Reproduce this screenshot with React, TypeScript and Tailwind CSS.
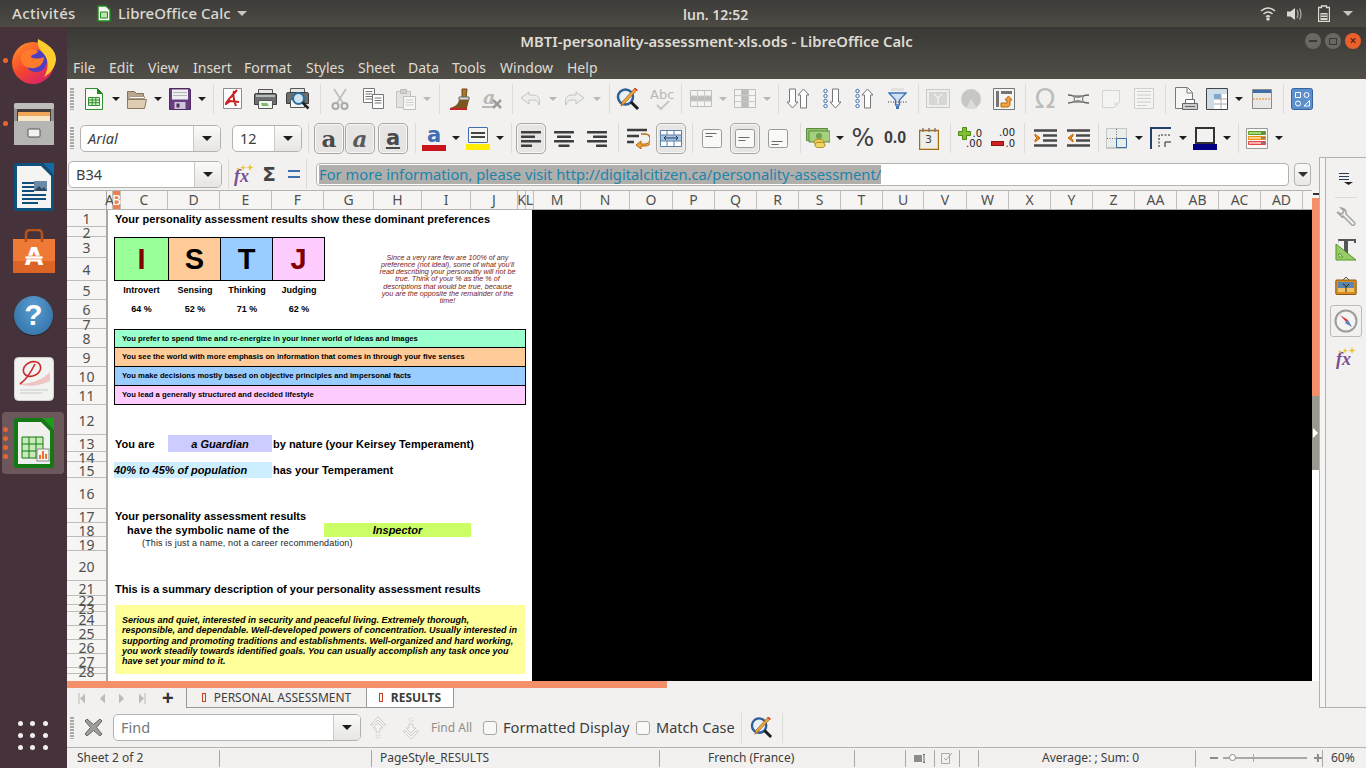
import React from "react";

type IconProps = { children: React.ReactNode; size?: number; h?: number; vb?: string };

function Svg({ children, size = 24, h, vb }: IconProps) {
  return (
    <svg width={size} height={h ?? size} viewBox={vb ?? `0 0 ${size} ${h ?? size}`} className="shrink-0 block">
      {children}
    </svg>
  );
}

/* ---------- toolbar icons ---------- */
const IconNew = () => (
  <Svg size={20} h={24}>
    <path d="M1.5 1.5h12l5 5v16h-17z" fill="#fbfbf8" stroke="#2f8f2f" />
    <path d="M13 1l6 6h-6z" fill="#1d8a1d" />
    <path d="M4.5 10.5h11v8h-11z" fill="#d6efc9" stroke="#2f8f2f" />
    <path d="M4.5 13h11M4.5 15.700h11M8.200 10.500v8M11.800 10.500v8" stroke="#2f8f2f" />
  </Svg>
);
const IconOpen = () => (
  <Svg size={22} h={22}>
    <path d="M1.500 3.500h7l2 2h7v14h-16z" fill="#b8a68d" stroke="#857259" />
    <path d="M3.500 8.500h15v2h-15z" fill="#fff" stroke="#a89a85" />
    <path d="M1.500 11.500h19l-2 9h-17z" fill="#dfcdb1" stroke="#8d7a5f" />
  </Svg>
);
const IconSave = () => (
  <Svg size={22} h={22}>
    <path d="M.5.500h20l1 1v20H.5z" fill="#6a3d83" stroke="#4e2a63" />
    <path d="M3 1.500h16v10H3z" fill="#eeeef0" />
    <path d="M4 4.500h14M4 7.500h14" stroke="#b4b4bb" />
    <path d="M5.500 14h11v7h-11z" fill="#cfc7d5" />
    <path d="M7.500 15.500h3v4h-3z" fill="#4e2a63" />
  </Svg>
);
const IconPdf = () => (
  <Svg size={19} h={21}>
    <path d="M.5.500h18v20H.5z" fill="#fff" stroke="#8d8d8d" />
    <path d="M14 2L6 11c-2 3-3 4-3 5 1 0 2-2 4-3l9 1M11 3c-2 5 0 9 2 15" fill="none" stroke="#cc1f1f" strokeWidth="2" />
  </Svg>
);
const IconPrint = () => (
  <Svg size={23} h={20}>
    <path d="M4.500.500h14v6h-14z" fill="#e6e6e6" stroke="#555" />
    <path d="M.5 5.500q0-1 2-1h18q2 0 2 1v10h-22z" fill="#6b6f70" stroke="#3b3d3d" />
    <path d="M2 6h19v2H2z" fill="#b9bcbc" />
    <path d="M4.500 11.500h14v8h-14z" fill="#f4f4f4" stroke="#555" />
    <path d="M7 14h6l2 3H8z" fill="#7cb96a" />
  </Svg>
);
const IconPreview = () => (
  <Svg size={24} h={22}>
    <path d="M4.500.500h14v6h-14z" fill="#e6e6e6" stroke="#555" />
    <path d="M.5 5.500q0-1 2-1h18q2 0 2 1v10h-22z" fill="#6b6f70" stroke="#3b3d3d" />
    <path d="M4.500 11.500h14v8h-14z" fill="#f4f4f4" stroke="#555" />
    <circle cx="12.500" cy="10.500" r="5.500" fill="#cfe3f2" stroke="#2c6f9e" strokeWidth="2" />
    <path d="M16.500 14.500l6 6" stroke="#222" strokeWidth="2.500" />
  </Svg>
);
const IconCut = () => (
  <Svg size={18} h={22}>
    <path d="M3 1l9 14M15 1L6 15" stroke="#bdbdbd" strokeWidth="1.600" fill="none" />
    <circle cx="4.500" cy="18" r="3" fill="none" stroke="#a9a9a9" strokeWidth="2" />
    <circle cx="13.500" cy="18" r="3" fill="none" stroke="#a9a9a9" strokeWidth="2" />
  </Svg>
);
const IconCopy = () => (
  <Svg size={21} h={21}>
    <path d="M.5.500h11v14H.5z" fill="#fff" stroke="#777" />
    <path d="M2.500 3.500h7M2.500 6h7M2.500 8.500h7M2.500 11h7" stroke="#777" />
    <path d="M9.500 6.500h11v14h-11z" fill="#fff" stroke="#777" />
    <path d="M11.500 10h7M11.500 12.500h7M11.500 15h7" stroke="#777" />
  </Svg>
);
const IconPaste = () => (
  <Svg size={20} h={22}>
    <path d="M.5 3.500h14v16H.5z" fill="#e4e3df" stroke="#c3c1bc" />
    <path d="M4.500 1.500h6v4h-6z" fill="#d1d0cc" stroke="#bbb" />
    <path d="M7.500 8.500h12v13h-12z" fill="#f7f7f6" stroke="#c3c1bc" />
    <path d="M9.500 12h8M9.500 14.500h8M9.500 17h8" stroke="#cfcdc9" />
  </Svg>
);
const IconBrush = () => (
  <Svg size={22} h={22}>
    <path d="M13 1h5l-1 9h-4z" fill="#a8762d" stroke="#6d4a18" />
    <path d="M10 9h10v3H10z" fill="#d8d8d4" stroke="#666" />
    <path d="M10 12h10l-2 8H1c4-1 8-3 9-8z" fill="#7a5520" />
    <path d="M1 20h17v2H1z" fill="#c8222a" />
  </Svg>
);
const IconClear = () => (
  <Svg size={22} h={22}>
    <text x="2" y="16" fontFamily="'DejaVu Serif'" fontStyle="italic" fontWeight="700" fontSize="19" fill="#b9b9b7">a</text>
    <path d="M12 12l8 8M20 12l-8 8" stroke="#9c9c9a" strokeWidth="2.500" />
    <path d="M1 19h11" stroke="#b9b9b7" strokeWidth="2" />
  </Svg>
);
const IconUndo = ({ flip }: { flip?: boolean }) => (
  <svg width="22" height="16" viewBox="0 0 22 16" className={flip ? "-scale-x-100 shrink-0" : "shrink-0"}>
    <path d="M9 1L1 7l8 6v-4h5c3 0 4 2 5 5 2-6-1-10-6-10H9z" fill="#eeeeec" stroke="#c3c3c1" />
  </svg>
);
const IconFind = ({ size = 24 }: { size?: number }) => (
  <svg width={size} height={size} viewBox="0 0 24 24" className="shrink-0">
    <circle cx="9.500" cy="10" r="7.500" fill="#e8f1f8" stroke="#2f5f99" strokeWidth="2.500" />
    <path d="M15 15l7 7" stroke="#1d1d1d" strokeWidth="3" />
    <path d="M21 3L8 17l-3 2 1-4L19 1z" fill="#f0a33c" stroke="#8a5a14" strokeWidth=".7" />
    <path d="M19 1l3 2-1 1-3-2z" fill="#d33" />
  </svg>
);
const IconSpell = () => (
  <div className="relative w-[22px] h-[21px] shrink-0">
    <span className="block text-[13px] leading-[13px] text-[#b8b8b6] font-['DejaVu_Sans']">Abc</span>
    <svg width="14" height="10" viewBox="0 0 14 10" className="absolute left-[6px] top-[12px]">
      <path d="M1 5l4 4 8-8" fill="none" stroke="#c6c6c4" strokeWidth="2" />
    </svg>
  </div>
);
const IconRows = () => (
  <Svg size={22} h={17}>
    <path d="M.5.500h21v16H.5z" fill="#f4f4f2" stroke="#bdbdbb" />
    <path d="M1 6h20v5H1z" fill="#bdbdbb" />
    <path d="M7.500 1v15M14.500 1v15M1 6h20M1 11h20" stroke="#c9c9c7" />
  </Svg>
);
const IconCols = () => (
  <Svg size={22} h={19}>
    <path d="M.5.500h21v18H.5z" fill="#f4f4f2" stroke="#bdbdbb" />
    <path d="M8 1h6v17H8z" fill="#bdbdbb" />
    <path d="M7.500 1v17M14.500 1v17M1 6.500h20M1 12.500h20" stroke="#c9c9c7" />
  </Svg>
);
const Arrow = ({ up, x }: { up?: boolean; x: number }) => (
  <path
    d={up ? `M${x} 1l5.500 6H${x + 3}v13h-6V7H${x - 5.500}z` : `M${x} 20l5.500-6H${x + 3}V1h-6v13H${x - 5.500}z`}
    fill="#fff"
    stroke="#777"
  />
);
const IconSort = () => (
  <Svg size={24} h={21}>
    <Arrow x={6.500} />
    <Arrow x={17.500} up />
  </Svg>
);
const Dots = () => (
  <>
    {[2, 7, 12, 17].map((y) => (
      <circle key={y} cx="2.500" cy={y + 1} r="1.700" fill="#fff" stroke="#3f6da8" />
    ))}
  </>
);
const IconSortDown = () => (
  <Svg size={19} h={21}>
    <Dots />
    <Arrow x={12.500} />
  </Svg>
);
const IconSortUp = () => (
  <Svg size={19} h={21}>
    <Dots />
    <Arrow x={12.500} up />
  </Svg>
);
const IconFilter = () => (
  <Svg size={19} h={23}>
    <path d="M3 1h13v3H3z" fill="#e2e2e0" />
    <path d="M1 6h17l-6.500 7v5h-4v-5z" fill="#cfe0f0" stroke="#3f78b5" strokeWidth="1.300" />
    <path d="M0 15h19" stroke="#333" strokeDasharray="1 1.500" />
    <path d="M8 19h3v3H8z" fill="#3f78b5" />
  </Svg>
);
const IconImage = () => (
  <Svg size={24} h={19}>
    <path d="M.5.500h23v18H.5z" fill="#eeeeec" stroke="#c9c9c7" />
    <path d="M3 3h18v13H3z" fill="#d6d6d4" />
    <path d="M12 15V9L8 5M12 9l4-4" stroke="#f2f2f0" strokeWidth="1.300" fill="none" />
  </Svg>
);
const IconChart = () => (
  <Svg size={20} h={20}>
    <circle cx="10" cy="10" r="10" fill="#c6c6c4" />
    <path d="M10 10L5 19a10 10 0 0 0 11 0z" fill="#dcdcda" />
  </Svg>
);
const IconPivot = () => (
  <Svg size={22} h={22}>
    <path d="M.5.500h21v21H.5z" fill="#f4f4f2" stroke="#777" />
    <path d="M3 3h3v16H3zM8 3h11v3H8z" fill="#757575" />
    <path d="M8 19h6c3 0 3-2 3-4v-3h2l-3.500-4-3.500 4h2v3H8z" fill="#f0a33c" stroke="#b46a10" />
  </Svg>
);
const IconLink = () => (
  <Svg size={21} h={14}>
    <path d="M0 3c5 0 6 2 10 2s5-2 11-2M0 11c5 0 6-2 10-2s5 2 11 2" fill="none" stroke="#666" strokeWidth="1.400" />
    <path d="M5 4c2 1 2 5 0 6h11c-2-1-2-5 0-6z" fill="none" stroke="#8a8a88" strokeWidth="1.300" />
  </Svg>
);
const IconNote = () => (
  <Svg size={18} h={18}>
    <path d="M.5.500h17v12l-5 5H.5z" fill="#f3f3f1" stroke="#d4d4d2" />
    <path d="M17 12.500h-4.500V17z" fill="#dfdfdd" />
  </Svg>
);
const IconHeaderPage = () => (
  <Svg size={20} h={21}>
    <path d="M.5.500h19v20H.5z" fill="#f4f4f2" stroke="#cfcfcd" />
    <path d="M3 3.500h14M3 7h14M3 10.500h14M3 14h14M3 17.500h10" stroke="#cdcdcb" />
  </Svg>
);
const IconPrintArea = () => (
  <Svg size={24} h={23}>
    <path d="M1.500.500h12l5 5v16h-17z" fill="#f6f6f4" stroke="#7a7a7a" />
    <path d="M13 1v5h5" fill="none" stroke="#7a7a7a" />
    <path d="M11.500 12.500h9v5h-9z" fill="#fff" stroke="#666" />
    <path d="M8.500 16.500h15v6h-15z" fill="#ccc" stroke="#666" />
    <path d="M11 19.500h10" stroke="#666" />
  </Svg>
);
const IconFreeze = () => (
  <Svg size={22} h={22}>
    <path d="M.5.500h21v21H.5z" fill="#fff" stroke="#444" />
    <path d="M1 1h20v5H1zM1 6h7v15H1z" fill="#cfdde9" />
    <path d="M8 6h7v5H8z" fill="#7fa6d0" />
    <path d="M8 11h13M8 16h13M15 6v15" stroke="#aaa" />
  </Svg>
);
const IconSplit = () => (
  <Svg size={20} h={20}>
    <path d="M.5.500h19v19H.5z" fill="#e8e8e6" stroke="#8c8c8a" />
    <path d="M1 1h18v3H1z" fill="#3f6da8" />
    <path d="M1 10h18" stroke="#f08a1d" strokeDasharray="2 1" />
  </Svg>
);
const IconShapes = () => (
  <Svg size={22} h={22}>
    <rect x=".5" y=".5" width="21" height="21" rx="2" fill="#5d8fcf" stroke="#34659f" />
    <path d="M4.500 4.500h5v5h-5z" fill="none" stroke="#fff" />
    <circle cx="15.500" cy="7" r="2.500" fill="none" stroke="#fff" />
    <circle cx="7" cy="15.500" r="2.500" fill="none" stroke="#fff" />
    <path d="M13 18h5.500v-5.500z" fill="none" stroke="#fff" />
  </Svg>
);

/* second row */
const IconAlign = ({ kind }: { kind: "l" | "c" | "r" }) => {
  const rows = [20, 14, 20, 11];
  return (
    <Svg size={20} h={17}>
      {rows.map((w, i) => {
        const x = kind === "l" ? 0 : kind === "r" ? 20 - w : (20 - w) / 2;
        return <rect key={i} x={x} y={1 + i * 4.500} width={w} height={2.400} rx=".5" fill="#3d3d3d" />;
      })}
    </Svg>
  );
};
const IconWrap = () => (
  <Svg size={23} h={21}>
    <path d="M0 2h20M0 8h12M0 14h7" stroke="#3d3d3d" strokeWidth="2.400" />
    <path d="M14 6h4a4 4 0 0 1 0 10h-4v-3l-5 4 5 4v-3h4a6 6 0 0 0 1-12h-5z" fill="#f0a33c" stroke="#b46a10" />
  </Svg>
);
const IconMerge = () => (
  <Svg size={22} h={17}>
    <path d="M.5.500h21v16H.5z" fill="#fff" stroke="#5a7ea6" />
    <path d="M1 5h20v6H1z" fill="#a9c4de" />
    <path d="M1 5h20M1 11h20M7 1v4M14 1v4M7 11v5M14 11v5" stroke="#5a7ea6" />
    <path d="M4 8h14M4 8l2-2M4 8l2 2M18 8l-2-2M18 8l-2 2" stroke="#1c3d66" fill="none" />
  </Svg>
);
const IconVAlign = ({ y }: { y: number }) => (
  <Svg size={20} h={19}>
    <rect x=".5" y=".5" width="19" height="18" rx="2" fill="#f9f9f8" stroke="#9a9a98" />
    <path d={`M3.500 ${y}h11M3.500 ${y + 3}h7`} stroke="#6b6b69" />
  </Svg>
);
const IconCurrency = () => (
  <Svg size={24} h={20}>
    <path d="M.5.500h21v12H.5z" fill="#8fc26a" stroke="#5c8a3c" />
    <path d="M3 3h21v11H3z" fill="#a6d080" stroke="#5c8a3c" />
    <circle cx="13" cy="8" r="3" fill="#6ea24a" />
    <ellipse cx="13" cy="14" rx="5" ry="3" fill="#e8cc57" stroke="#a88a1d" />
    <ellipse cx="14" cy="17" rx="5" ry="2.700" fill="#f0d766" stroke="#a88a1d" />
  </Svg>
);
const IconDate = () => (
  <div className="relative w-[20px] h-[23px] shrink-0">
    <svg width="20" height="23" viewBox="0 0 20 23">
      <path d="M.5 3.500h19v19H.5z" fill="#eeeeea" stroke="#a66c12" strokeWidth="1.400" />
      <path d="M4 1v4M10 1v4M16 1v4" stroke="#777" strokeWidth="1.400" />
    </svg>
    <span className="absolute left-[6px] top-[6px] text-[11px] leading-[14px] text-[#444] font-['DejaVu_Sans']">3</span>
  </div>
);
const IconIndent = ({ out }: { out?: boolean }) => (
  <Svg size={23} h={18}>
    <path d="M0 1.500h23M9 6.500h14M9 11.500h14M0 16.500h23" stroke="#4a4a4a" strokeWidth="2.400" />
    <path d={out ? "M6 5L1 9l5 4V11L4 9l2-2z" : "M1 5l5 4-5 4v-2l2-2-2-2z"} fill="#ee8a1c" stroke="#c16a0c" />
  </Svg>
);
const IconBorders = () => (
  <Svg size={22} h={21}>
    <path d="M.5.500h20v19H.5z" fill="#e9eeea" stroke="#c5c5c3" />
    <path d="M10.500 1v9" stroke="#667" strokeDasharray="1 1.500" />
    <path d="M1 10.500h9" stroke="#667" strokeDasharray="1 1.500" />
    <path d="M10.500 10.500h10v9h-10z" fill="none" stroke="#3f6da8" />
    <path d="M0 20.500h21" stroke="#c8c8c6" />
  </Svg>
);
const IconBorderStyle = () => (
  <Svg size={22} h={23}>
    <path d="M1 22V1h20" fill="none" stroke="#22406a" strokeWidth="2" />
    <path d="M9 20V8h11" fill="none" stroke="#222" strokeDasharray="2 1.500" />
    <path d="M15 20v-5h6" fill="none" stroke="#222" />
  </Svg>
);
const IconBorderColor = () => (
  <div className="flex flex-col items-center shrink-0">
    <svg width="20" height="17" viewBox="0 0 20 17">
      <path d="M1 1h18v15H1z" fill="#f2f2f0" stroke="#333" strokeWidth="2" />
    </svg>
    <div className="w-[24px] h-[6px] bg-[#000080]" />
  </div>
);
const IconCond = () => (
  <Svg size={22} h={21}>
    <path d="M.5.500h21v20H.5z" fill="#f8f8f6" stroke="#9a9a98" />
    <path d="M2.500 3.500h17v3h-17z" fill="#a7d67a" stroke="#5f9d22" />
    <path d="M2.500 8.500h17v3h-17z" fill="#ffd08a" stroke="#ef8e14" />
    <path d="M2.500 13.500h17v3h-17z" fill="#ffb0b0" stroke="#e54545" />
    <path d="M15 5h4M15 10h4M15 15h4" stroke="#333" />
  </Svg>
);
const IconFx = () => (
  <div className="relative shrink-0 w-[22px] h-[20px]">
    <span className="absolute left-[1px] -bottom-[1px] font-['Liberation_Serif'] italic font-bold text-[18px] leading-[18px] text-[#7a4f93]">fx</span>
    <svg width="22" height="20" viewBox="0 0 22 20" className="absolute inset-0">
      <path d="M10 1l1 2 2 .5-2 1-1 2-.7-2-2-1 2-.5zM17 0l1 2.500 2.500 1-2.500 1-1 2.500-1-2.500-2.500-1 2.500-1z" fill="#e8c93a" />
      <path d="M5 3l.6 1.300 1.400.5-1.400.5L5 6.600l-.6-1.300L3 4.800l1.400-.5z" fill="#e8c93a" />
    </svg>
  </div>
);

/* ---------- toolbar parts ---------- */
function T({ w, children }: { w: string; children: React.ReactNode }) {
  return <div className={`${w} h-full flex items-center justify-center shrink-0`}>{children}</div>;
}
function Dd({ w, dim }: { w: string; dim?: boolean }) {
  return (
    <T w={w}>
      <div className={`w-0 h-0 border-x-[4px] border-x-transparent border-t-[4px] ${dim ? "border-t-[#b8b8b6]" : "border-t-[#1d1d1d]"}`} />
    </T>
  );
}
function Sep({ w }: { w: string }) {
  return (
    <T w={w}>
      <div className="w-px h-[30px] bg-[#dcdbd8]" />
    </T>
  );
}
function Handle() {
  return (
    <div className="w-[4px] h-[22px] shrink-0 bg-[repeating-linear-gradient(to_bottom,#a9a8a5_0,#a9a8a5_2px,transparent_2px,transparent_3px)]" />
  );
}
function Pressed({ children }: { children: React.ReactNode }) {
  return (
    <div className="w-[30px] h-[31px] rounded-[5px] border border-[#a8a7a4] bg-[#e6e5e3] flex items-center justify-center shadow-[inset_0_0_0_1px_#f7f7f6]">
      {children}
    </div>
  );
}
function Combo({ w, text, italic, btn = "w-[27px]", muted }: { w: string; text: string; italic?: boolean; btn?: string; muted?: boolean }) {
  return (
    <div className={`${w} h-[27px] shrink-0 flex rounded-[5px] border border-[#b3b2af] bg-white overflow-hidden`}>
      <div className={`flex-1 pl-[7px] text-[14.5px] leading-[25px] ${muted ? "text-[#777]" : "text-[#3d3d3d]"} ${italic ? "italic" : ""}`}>{text}</div>
      <div className={`${btn} border-l border-[#c9c8c5] bg-linear-to-b from-[#fafaf9] to-[#e6e5e3] flex items-center justify-center`}>
        <div className="w-0 h-0 border-x-[5px] border-x-transparent border-t-[5px] border-t-[#1d1d1d]" />
      </div>
    </div>
  );
}

/* ---------- desktop bits ---------- */
function TopBar() {
  return (
    <div className="h-[27px] shrink-0 relative flex items-center bg-linear-to-b from-[#3d3c38] to-[#4e4b45] text-[#dcd9d2] text-[15px] font-medium">
      <span className="ml-[12px] w-[85px] tracking-[0.35px]">Activités</span>
      <svg width="14" height="17" viewBox="0 0 14 17" className="shrink-0">
        <path d="M1 1h8l4 4v11H1z" fill="#f4f4f2" stroke="#1f8a1f" strokeWidth="1.400" />
        <path d="M3.500 7h7v6h-7z" fill="#bfe3b0" stroke="#1f8a1f" />
      </svg>
      <span className="ml-[7px] tracking-[0.05px]">LibreOffice Calc</span>
      <div className="ml-[6px] w-0 h-0 border-x-[5px] border-x-transparent border-t-[5px] border-t-[#c9c6bf]" />
      <span className="absolute left-[683px] top-[4px] text-[14px] font-semibold">lun. 12:52</span>
      <div className="ml-auto flex items-center mr-[13px]">
        <svg width="16" height="15" viewBox="0 0 16 15">
          <path d="M1 5q7-6 14 0M3.500 8q4.500-4 9 0M6 10.700q2-1.700 4 0" fill="none" stroke="#dcd9d2" strokeWidth="1.500" />
          <circle cx="8" cy="13" r="1.700" fill="#dcd9d2" />
        </svg>
        <svg width="16" height="14" viewBox="0 0 16 14" className="ml-[11px]">
          <path d="M0 4.500h3.500L8 1v12L3.500 9.500H0z" fill="#dcd9d2" />
          <path d="M10 3q2 4 0 8M12.500 1.500q3 5.500 0 11" fill="none" stroke="#a9a69f" strokeWidth="1.300" />
        </svg>
        <svg width="12" height="17" viewBox="0 0 12 17" className="ml-[15px]">
          <path d="M3.500 1h5v1.500H11.500V16.500H.5V2.500h3z" fill="none" stroke="#dcd9d2" strokeWidth="1.300" />
          <path d="M2.500 8h7v7h-7z" fill="#dcd9d2" />
          <path d="M3 10h6M3 12.500h6" stroke="#4a4843" />
        </svg>
        <div className="ml-[13px] w-0 h-0 border-x-[5px] border-x-transparent border-t-[5px] border-t-[#c9c6bf]" />
      </div>
    </div>
  );
}

function Firefox() {
  return (
    <svg width="46" height="46" viewBox="0 0 46 46">
      <defs>
        <linearGradient id="ff" x1="0" y1="0" x2=".7" y2="1">
          <stop offset="0" stopColor="#ff9a2a" />
          <stop offset=".55" stopColor="#f6472c" />
          <stop offset="1" stopColor="#d9246a" />
        </linearGradient>
      </defs>
      <circle cx="22" cy="25" r="21" fill="url(#ff)" />
      <circle cx="25" cy="23" r="11" fill="#4f3fc0" />
      <path d="M27 1c-1 6 1 10 5 14 6 6 6 16 1 24 7-4 12-11 12-18 0-9-8-15-18-20z" fill="#ffcb2f" />
      <path d="M11 15c4-4 10-5 16-2-1 4-7 3-7 6 3 2 8 2 13 0 0 7-6 12-13 11-5 0-9-3-10-8 0-3 0-5 1-7z" fill="#ff7a2a" />
    </svg>
  );
}
function FilesIcon() {
  return (
    <svg width="42" height="44" viewBox="0 0 42 44">
      <rect x="1" y="1" width="40" height="42" rx="2" fill="#8f8f8d" />
      <rect x="1" y="1" width="40" height="6" rx="2" fill="#bdbdbb" />
      <rect x="4" y="7" width="34" height="14" fill="#433e3c" />
      <rect x="5" y="10" width="32" height="4" fill="#f2a65a" />
      <rect x="5" y="14" width="32" height="5" fill="#f7e6c9" />
      <path d="M1 19h40v24H1z" fill="#b5b5b3" />
      <rect x="15" y="27" width="12" height="8" rx="1" fill="#f2f2f0" stroke="#555" />
    </svg>
  );
}
function WriterIcon() {
  return (
    <svg width="40" height="48" viewBox="0 0 40 48">
      <path d="M0 2q0-2 2-2h26l12 12v34q0 2-2 2H2q-2 0-2-2z" fill="#0f4f7c" />
      <path d="M3 3h24l10 10v32H3z" fill="#f4f4f2" />
      <path d="M29 0l11 12V0z" fill="#0f6ca8" />
      <path d="M8 20h12M8 24h12M8 28h12M8 32h24M8 36h24M8 40h16" stroke="#0f4f7c" strokeWidth="2" />
      <rect x="20" y="18" width="13" height="10" fill="#6d8aa5" />
      <path d="M20 28l5-5 3 3 2-2 3 4z" fill="#2a4a66" />
    </svg>
  );
}
function ShopIcon() {
  return (
    <svg width="42" height="44" viewBox="0 0 42 44">
      <path d="M0 10h42v34H0z" fill="#ef7a35" />
      <path d="M0 32h42v12H0z" fill="#dc6425" />
      <path d="M13 13V5q0-4 4-4h8q4 0 4 4v8" fill="none" stroke="#b5531c" strokeWidth="2.500" />
      <text x="21" y="36" textAnchor="middle" fontFamily="'DejaVu Sans'" fontWeight="700" fontSize="24" fill="#fff">A</text>
      <rect x="12" y="27" width="18" height="3" rx="1.500" fill="#fff" stroke="#ef7a35" strokeWidth=".6" />
    </svg>
  );
}
function HelpIcon() {
  return (
    <div className="w-[39px] h-[39px] rounded-full bg-radial-[at_50%_30%] from-[#5c9ed0] to-[#2a6ba3] flex items-center justify-center text-white font-bold text-[30px] leading-none font-['Liberation_Sans'] shadow-[0_1px_1px_#0006]">
      ?
    </div>
  );
}
function PaperIcon() {
  return (
    <svg width="40" height="44" viewBox="0 0 40 44">
      <rect x=".5" y=".5" width="39" height="43" rx="4" fill="#f2f2f0" stroke="#cfcfcd" />
      <path d="M4 27c10 0 24-3 32-12v9c-10 5-22 6-32 3z" fill="#eec4c4" />
      <ellipse cx="18" cy="12" rx="9" ry="7" fill="none" stroke="#c92a2a" strokeWidth="1.600" transform="rotate(-25 18 12)" />
      <path d="M21 7c-4 8-9 16-15 20" fill="none" stroke="#c92a2a" strokeWidth="1.600" />
      <path d="M6 33h28M6 36h22" stroke="#c9c9c7" />
    </svg>
  );
}
function CalcIcon() {
  return (
    <svg width="40" height="50" viewBox="0 0 40 50">
      <path d="M0 3q0-3 3-3h25l12 12v35q0 3-3 3H3q-3 0-3-3z" fill="#137a13" />
      <path d="M4 4h23l9 9v33H4z" fill="#f0f0ee" />
      <path d="M29 0l11 12V0z" fill="#18a018" />
      <path d="M8 19h21v21H8z" fill="#c7eab8" stroke="#137a13" />
      <path d="M8 26h21M8 33h21M15 19v21M22 19v21" stroke="#137a13" />
      <rect x="23" y="31" width="12" height="12" fill="#f4f4f2" stroke="#888" />
      <path d="M25 41v-4h2v4zM28 41v-8h2v8zM31 41v-5h2v5z" fill="#e8762d" />
    </svg>
  );
}

function DockSlot({ className, dots = 0, active, children }: { className: string; dots?: number; active?: boolean; children: React.ReactNode }) {
  return (
    <div className={`relative w-[67px] flex items-center justify-center shrink-0 ${className}`}>
      {active && <div className="absolute left-[2px] right-[3px] inset-y-0 rounded-[4px] bg-[#6b575c]" />}
      {dots > 0 && (
        <div className="absolute left-[3px] inset-y-0 flex flex-col justify-center gap-[4px] z-10">
          {Array.from({ length: dots }).map((_, i) => (
            <div key={i} className="w-[5px] h-[5px] rounded-full bg-[#e9652f]" />
          ))}
        </div>
      )}
      <div className="relative">{children}</div>
    </div>
  );
}

function Dock() {
  return (
    <div className="w-[67px] shrink-0 bg-[#46323a] flex flex-col">
      <DockSlot className="h-[63px] mt-[2px]" dots={1}><Firefox /></DockSlot>
      <DockSlot className="h-[63px]" dots={1}><FilesIcon /></DockSlot>
      <DockSlot className="h-[63px]"><WriterIcon /></DockSlot>
      <DockSlot className="h-[64px] mt-[1px]"><ShopIcon /></DockSlot>
      <DockSlot className="h-[64px]"><HelpIcon /></DockSlot>
      <DockSlot className="h-[63px]"><PaperIcon /></DockSlot>
      <DockSlot className="h-[62px] mt-[2px]" dots={4} active><CalcIcon /></DockSlot>
      <div className="mt-auto mb-[18px] ml-[18px] grid grid-cols-3 gap-[7px] w-[30px]">
        {Array.from({ length: 9 }).map((_, i) => (
          <div key={i} className="w-[5px] h-[5px] rounded-full bg-[#f1efec]" />
        ))}
      </div>
    </div>
  );
}

/* ---------- toolbars ---------- */
function ToolbarOne() {
  return (
    <div className="h-[39px] shrink-0 flex items-center pl-[3px]">
      <Handle />
      <div className="w-[4px] shrink-0" />
      <T w="w-[32px]"><IconNew /></T>
      <Dd w="w-[12px]" />
      <T w="w-[30px]"><IconOpen /></T>
      <Dd w="w-[12px]" />
      <T w="w-[32px]"><IconSave /></T>
      <Dd w="w-[12px]" />
      <Sep w="w-[10px]" />
      <T w="w-[28px]"><IconPdf /></T>
      <T w="w-[38px]"><IconPrint /></T>
      <T w="w-[28px]"><IconPreview /></T>
      <Sep w="w-[16px]" />
      <T w="w-[24px]"><IconCut /></T>
      <T w="w-[42px]"><IconCopy /></T>
      <T w="w-[24px]"><IconPaste /></T>
      <Dd w="w-[18px]" dim />
      <Sep w="w-[6px]" />
      <T w="w-[36px]"><IconBrush /></T>
      <T w="w-[28px]"><IconClear /></T>
      <Sep w="w-[12px]" />
      <T w="w-[26px]"><IconUndo /></T>
      <Dd w="w-[18px]" dim />
      <T w="w-[24px]"><IconUndo flip /></T>
      <Dd w="w-[22px]" dim />
      <Sep w="w-[2px]" />
      <T w="w-[36px]"><IconFind /></T>
      <T w="w-[30px]"><IconSpell /></T>
      <Sep w="w-[10px]" />
      <T w="w-[30px]"><IconRows /></T>
      <Dd w="w-[14px]" dim />
      <T w="w-[30px]"><IconCols /></T>
      <Dd w="w-[14px]" dim />
      <Sep w="w-[8px]" />
      <T w="w-[32px]"><IconSort /></T>
      <T w="w-[36px]"><IconSortDown /></T>
      <T w="w-[28px]"><IconSortUp /></T>
      <T w="w-[38px]"><IconFilter /></T>
      <Sep w="w-[4px]" />
      <T w="w-[36px]"><IconImage /></T>
      <T w="w-[30px]"><IconChart /></T>
      <T w="w-[36px]"><IconPivot /></T>
      <Sep w="w-[6px]" />
      <T w="w-[34px]"><span className="font-['DejaVu_Sans'] text-[27px] leading-none text-[#bdbdbb]">Ω</span></T>
      <T w="w-[32px]"><IconLink /></T>
      <T w="w-[34px]"><IconNote /></T>
      <T w="w-[32px]"><IconHeaderPage /></T>
      <Sep w="w-[10px]" />
      <T w="w-[32px]"><IconPrintArea /></T>
      <T w="w-[30px]"><IconFreeze /></T>
      <Dd w="w-[14px]" />
      <T w="w-[32px]"><IconSplit /></T>
      <Sep w="w-[10px]" />
      <T w="w-[28px]"><IconShapes /></T>
    </div>
  );
}

function ToolbarTwo() {
  return (
    <div className="h-[40px] shrink-0 flex items-center pl-[3px]">
      <Handle />
      <div className="w-[6px] shrink-0" />
      <Combo w="w-[141px]" text="Arial" italic />
      <div className="w-[11px] shrink-0" />
      <Combo w="w-[70px]" text="12" />
      <Sep w="w-[12px]" />
      <T w="w-[30px]"><Pressed><span className="font-['DejaVu_Serif'] font-bold text-[23px] leading-none text-[#4a4a4a]">a</span></Pressed></T>
      <T w="w-[32px]"><Pressed><span className="font-['DejaVu_Serif'] font-bold italic text-[23px] leading-none text-[#5a5a5a]">a</span></Pressed></T>
      <T w="w-[34px]"><Pressed><span className="font-['DejaVu_Sans'] font-bold underline text-[21px] leading-none text-[#4a4a4a]">a</span></Pressed></T>
      <Sep w="w-[10px]" />
      <T w="w-[28px]">
        <div className="flex flex-col items-center">
          <span className="font-['DejaVu_Sans'] font-bold text-[21px] leading-[20px] text-[#3f6fb0]">a</span>
          <div className="w-[24px] h-[6px] bg-[#c9141c]" />
        </div>
      </T>
      <Dd w="w-[16px]" />
      <T w="w-[28px]">
        <div className="flex flex-col items-center">
          <div className="w-[20px] h-[16px] mb-[1px] rounded-[1px] border border-[#3f6fb0] bg-[#f4f4f2] flex flex-col justify-center gap-[2px] px-[2px]">
            <div className="h-[2px] bg-[#444]" />
            <div className="h-[2px] bg-[#444]" />
          </div>
          <div className="w-[24px] h-[6px] bg-[#ffee00]" />
        </div>
      </T>
      <Dd w="w-[16px]" />
      <Sep w="w-[6px]" />
      <T w="w-[34px]"><Pressed><IconAlign kind="l" /></Pressed></T>
      <T w="w-[32px]"><IconAlign kind="c" /></T>
      <T w="w-[34px]"><IconAlign kind="r" /></T>
      <Sep w="w-[8px]" />
      <T w="w-[32px]"><IconWrap /></T>
      <T w="w-[34px]"><Pressed><IconMerge /></Pressed></T>
      <Sep w="w-[8px]" />
      <T w="w-[32px]"><IconVAlign y={4.500} /></T>
      <T w="w-[34px]"><Pressed><IconVAlign y={8.500} /></Pressed></T>
      <T w="w-[32px]"><IconVAlign y={12.500} /></T>
      <Sep w="w-[12px]" />
      <T w="w-[24px]"><IconCurrency /></T>
      <Dd w="w-[20px]" />
      <T w="w-[26px]"><span className="font-['DejaVu_Sans'] text-[24px] leading-none text-[#3d3d3d]">%</span></T>
      <T w="w-[38px]"><span className="font-['Liberation_Sans'] font-bold text-[16px] leading-none text-[#3d3d3d]">0.0</span></T>
      <T w="w-[30px]"><IconDate /></T>
      <Sep w="w-[12px]" />
      <T w="w-[28px]">
        <div className="relative w-[24px] h-[22px] font-['DejaVu_Sans'] text-[10px] leading-[11px] text-[#222]">
          <svg width="13" height="13" viewBox="0 0 13 13" className="absolute left-0 top-0">
            <path d="M4.500.500h4v4h4v4h-4v4h-4v-4h-4v-4h4z" fill="#7fbf30" stroke="#4f8a15" />
          </svg>
          <span className="absolute right-0 top-[1px]">.0</span>
          <span className="absolute right-0 bottom-0">.00</span>
        </div>
      </T>
      <T w="w-[38px]">
        <div className="relative w-[24px] h-[22px] font-['DejaVu_Sans'] text-[10px] leading-[11px] text-[#222]">
          <div className="absolute left-0 top-[14px] w-[13px] h-[5px] bg-[#d12020] border border-[#8f1212]" />
          <span className="absolute right-0 top-0">.00</span>
          <span className="absolute right-0 bottom-0">.0</span>
        </div>
      </T>
      <Sep w="w-[4px]" />
      <T w="w-[38px]"><IconIndent /></T>
      <T w="w-[28px]"><IconIndent out /></T>
      <Sep w="w-[12px]" />
      <T w="w-[26px]"><IconBorders /></T>
      <Dd w="w-[18px]" />
      <T w="w-[26px]"><IconBorderStyle /></T>
      <Dd w="w-[18px]" />
      <T w="w-[26px]"><IconBorderColor /></T>
      <Dd w="w-[18px]" />
      <Sep w="w-[4px]" />
      <T w="w-[34px]"><IconCond /></T>
      <Dd w="w-[10px]" />
    </div>
  );
}

function FormulaBar() {
  return (
    <div className="h-[32px] shrink-0 flex items-center pl-px pr-[8px]">
      <Combo w="w-[154px]" text="B34" btn="w-[27px]" />
      <Sep w="w-[12px]" />
      <T w="w-[20px]"><IconFx /></T>
      <T w="w-[30px]"><span className="font-['DejaVu_Sans'] font-bold text-[20px] leading-none text-[#444]">Σ</span></T>
      <T w="w-[20px]">
        <div className="w-[12px] h-[8px] border-y-[2.500px] border-[#3f6fb0]" />
      </T>
      <Sep w="w-[4px]" />
      <div className="w-[8px] shrink-0" />
      <div className="flex-1 h-[23px] rounded-[4px] border border-[#b3b2af] bg-white pl-[2px] flex items-center overflow-hidden">
        <span className="bg-[#b0afac] text-[#1d84ab] text-[14.750px] leading-[19px] whitespace-nowrap">
          For more information, please visit http://digitalcitizen.ca/personality-assessment/
        </span>
      </div>
      <div className="ml-[5px] w-[17px] h-[23px] shrink-0 rounded-[4px] border border-[#b3b2af] bg-linear-to-b from-[#fafaf9] to-[#e9e8e6] flex items-center justify-center">
        <div className="w-0 h-0 border-x-[5px] border-x-transparent border-t-[5px] border-t-[#333]" />
      </div>
    </div>
  );
}

const columns = [
  { l: "A", w: "w-[6px]" },
  { l: "B", w: "w-[8px]", sel: true },
  { l: "C", w: "w-[47px]" },
  { l: "D", w: "w-[52px]" },
  { l: "E", w: "w-[52px]" },
  { l: "F", w: "w-[52px]" },
  { l: "G", w: "w-[50px]" },
  { l: "H", w: "w-[48px]" },
  { l: "I", w: "w-[49px]" },
  { l: "J", w: "w-[47px]" },
  { l: "K", w: "w-[8px]" },
  { l: "L", w: "w-[8px]" },
  { l: "M", w: "w-[47px]" },
  { l: "N", w: "w-[49px]" },
  { l: "O", w: "w-[43px]" },
  { l: "P", w: "w-[42px]" },
  { l: "Q", w: "w-[42px]" },
  { l: "R", w: "w-[42px]" },
  { l: "S", w: "w-[42px]" },
  { l: "T", w: "w-[42px]" },
  { l: "U", w: "w-[41px]" },
  { l: "V", w: "w-[43px]" },
  { l: "W", w: "w-[42px]" },
  { l: "X", w: "w-[42px]" },
  { l: "Y", w: "w-[42px]" },
  { l: "Z", w: "w-[42px]" },
  { l: "AA", w: "w-[42px]" },
  { l: "AB", w: "w-[42px]" },
  { l: "AC", w: "w-[42px]" },
  { l: "AD", w: "w-[42px]" },
];

function ColumnHeader() {
  return (
    <div className="h-[20px] shrink-0 flex border-y border-[#b4b3b0] bg-[#f6f5f4] text-[14px] leading-[18px] text-[#50504e]">
      <div className="w-[40px] shrink-0 border-r border-[#a9a8a5]" />
      {columns.map((c) => (
        <div
          key={c.l}
          className={`${c.w} shrink-0 border-r border-[#c0bfbc] flex justify-center whitespace-nowrap ${c.sel ? "bg-[#ef7f4e] text-white" : ""}`}
        >
          {c.l}
        </div>
      ))}
    </div>
  );
}

const rows = [
  { n: 1, h: "h-[17px]" }, { n: 2, h: "h-[10px]" }, { n: 3, h: "h-[21px]" }, { n: 4, h: "h-[23px]" },
  { n: 5, h: "h-[19px]" }, { n: 6, h: "h-[19px]" }, { n: 7, h: "h-[10px]" }, { n: 8, h: "h-[19px]" },
  { n: 9, h: "h-[19px]" }, { n: 10, h: "h-[19px]" }, { n: 11, h: "h-[19px]" }, { n: 12, h: "h-[30px]" },
  { n: 13, h: "h-[17px]" }, { n: 14, h: "h-[10px]" }, { n: 15, h: "h-[16px]" }, { n: 16, h: "h-[31px]" },
  { n: 17, h: "h-[14px]" }, { n: 18, h: "h-[14px]" }, { n: 19, h: "h-[14px]" }, { n: 20, h: "h-[30px]" },
  { n: 21, h: "h-[15px]" }, { n: 22, h: "h-[9px]" }, { n: 23, h: "h-[7px]" }, { n: 24, h: "h-[14px]" },
  { n: 25, h: "h-[14px]" }, { n: 26, h: "h-[14px]" }, { n: 27, h: "h-[14px]" }, { n: 28, h: "h-[6px]" },
];

function RowHeader() {
  return (
    <div className="w-[41px] shrink-0 bg-[#f6f5f4] border-r-2 border-[#a9a8a5] text-[14px] text-[#50504e]">
      {rows.map((r) => (
        <div key={r.n} className={`${r.h} border-b border-[#bdbcb9] flex items-center justify-center leading-none pt-[2px]`}>
          {r.n}
        </div>
      ))}
    </div>
  );
}

const bold = "font-bold text-[11px] leading-[14px] whitespace-nowrap text-black";

function Letter({ col, bg, color, children }: { col: string; bg: string; color: string; children: string }) {
  return (
    <div className={`${col} row-start-3 row-span-2 ${bg} ${color} border-y border-r border-black flex items-center justify-center text-[29px] font-bold leading-none`}>
      {children}
    </div>
  );
}
function Label({ col, row, children }: { col: string; row: string; children: string }) {
  return (
    <div className={`${col} ${row} flex items-center justify-center font-bold text-[9px] whitespace-nowrap text-black`}>{children}</div>
  );
}
function Strip({ row, bg, children }: { row: string; bg: string; children: string }) {
  return (
    <div className={`${row} col-start-2 col-span-9 mr-[6px] ${bg} border-x border-b border-black flex items-center pl-[7px] font-bold text-[7.700px] whitespace-nowrap text-black`}>
      {children}
    </div>
  );
}

function Sheet() {
  return (
    <div className="w-[424px] shrink-0 bg-white font-['Liberation_Sans'] grid grid-cols-[6px_55px_52px_52px_52px_49px_49px_50px_47px_12px] grid-rows-[17px_10px_21px_23px_19px_19px_10px_19px_19px_19px_19px_30px_17px_10px_16px_31px_14px_14px_14px_30px_15px_9px_7px_14px_14px_14px_14px_6px_7px]">
      <div className={`row-start-1 col-start-2 col-span-8 pl-px flex items-center tracking-[0.045px] ${bold}`}>
        Your personality assessment results show these dominant preferences
      </div>

      <Letter col="col-start-2 border-l" bg="bg-[#99ff99]" color="text-[#800000]">I</Letter>
      <Letter col="col-start-3" bg="bg-[#ffcc99]" color="text-black">S</Letter>
      <Letter col="col-start-4" bg="bg-[#99ccff]" color="text-black">T</Letter>
      <Letter col="col-start-5" bg="bg-[#ffccff]" color="text-[#800000]">J</Letter>

      <div className="row-start-3 row-span-4 col-start-6 col-span-5 flex items-center justify-center pl-[44px] pr-[6px] pt-[2px]">
        <p className="italic text-[7.200px] leading-[7.100px] text-center text-[#7a1a10] whitespace-nowrap">
          Since a very rare few are 100% of any<br />
          preference (not ideal), some of what you'll<br />
          read describing your personality will not be<br />
          true. Think of your % as the % of<br />
          descriptions that would be true, because<br />
          you are the opposite the remainder of the<br />
          time!
        </p>
      </div>

      <Label col="col-start-2" row="row-start-5">Introvert</Label>
      <Label col="col-start-3" row="row-start-5">Sensing</Label>
      <Label col="col-start-4" row="row-start-5">Thinking</Label>
      <Label col="col-start-5" row="row-start-5">Judging</Label>
      <Label col="col-start-2" row="row-start-6">64 %</Label>
      <Label col="col-start-3" row="row-start-6">52 %</Label>
      <Label col="col-start-4" row="row-start-6">71 %</Label>
      <Label col="col-start-5" row="row-start-6">62 %</Label>

      <Strip row="row-start-8 border-t" bg="bg-[#99ffcc]">You prefer to spend time and re-energize in your inner world of ideas and images</Strip>
      <Strip row="row-start-9" bg="bg-[#ffcc99]">You see the world with more emphasis on information that comes in through your five senses</Strip>
      <Strip row="row-start-10" bg="bg-[#99ccff]">You make decisions mostly based on objective principles and impersonal facts</Strip>
      <Strip row="row-start-11" bg="bg-[#ffccff]">You lead a generally structured and decided lifestyle</Strip>

      <div className={`row-start-13 col-start-2 pl-px flex items-center ${bold}`}>You are</div>
      <div className={`row-start-13 col-start-2 col-span-3 ml-[54px] mr-px bg-[#ccccff] flex items-center justify-center italic ${bold}`}>a Guardian</div>
      <div className={`row-start-13 col-start-5 col-span-5 flex items-center ${bold}`}>by nature (your Keirsey Temperament)</div>

      <div className={`row-start-15 col-start-2 col-span-3 mr-px bg-[#cceeff] flex items-center italic ${bold}`}>40% to 45% of population</div>
      <div className={`row-start-15 col-start-5 col-span-5 flex items-center ${bold}`}>has your Temperament</div>

      <div className={`row-start-17 col-start-2 col-span-5 pl-px flex items-center ${bold}`}>Your personality assessment results</div>
      <div className={`row-start-18 col-start-2 col-span-4 pl-[13px] flex items-center tracking-[0.07px] ${bold}`}>have the symbolic name of the</div>
      <div className={`row-start-18 col-start-6 col-span-3 -ml-px mr-[2px] bg-[#ccff66] flex items-center justify-center italic ${bold}`}>Inspector</div>
      <div className="row-start-19 col-start-2 col-span-7 pl-[28px] flex items-center text-[9px] tracking-[0.14px] whitespace-nowrap text-[#222]">
        (This is just a name, not a career recommendation)
      </div>

      <div className={`row-start-21 col-start-2 col-span-8 pl-px flex items-center ${bold}`}>
        This is a summary description of your personality assessment results
      </div>

      <div className="row-start-23 row-span-6 col-start-2 col-span-9 ml-px mr-[7px] bg-[#ffff99] pl-[7px] pt-[10px] italic font-bold text-[9px] leading-[10.300px] whitespace-nowrap text-black">
        Serious and quiet, interested in security and peaceful living. Extremely thorough,<br />
        responsible, and dependable. Well-developed powers of concentration. Usually interested in<br />
        supporting and promoting traditions and establishments. Well-organized and hard working,<br />
        you work steadily towards identified goals. You can usually accomplish any task once you<br />
        have set your mind to it.
      </div>
    </div>
  );
}

function VScroll() {
  return (
    <div className="w-[7px] shrink-0 flex flex-col bg-[#f6f5f4] -mt-[20px] relative">
      <div className="h-[8px] flex items-center justify-center"><div className="w-[6px] h-[2px] bg-[#333]" /></div>
      <div className="h-[198px] bg-[#f3906a]" />
      <div className="h-[74px] bg-[#9b9892] flex items-center justify-center">
        <div className="w-0 h-0 border-y-[5px] border-y-transparent border-l-[5px] border-l-white" />
      </div>
      <div className="flex-1 bg-white" />
    </div>
  );
}

function TabNav({ flip, end }: { flip?: boolean; end?: boolean }) {
  return (
    <svg width="8" height="11" viewBox="0 0 8 11" className={flip ? "-scale-x-100" : ""}>
      <path d="M1 0.500l5 5-5 5z" fill="#bdbcb9" />
      {end && <path d="M7 0v11" stroke="#bdbcb9" />}
    </svg>
  );
}

function TabsBar() {
  return (
    <div className="h-[20px] shrink-0 flex items-center text-[12px] text-[#3d3d3d]">
      <div className="w-[119px] shrink-0 flex items-center pl-[11px]">
        <div className="w-[20px]"><TabNav flip end /></div>
        <div className="w-[20px]"><TabNav flip /></div>
        <div className="w-[20px]"><TabNav /></div>
        <div className="w-[24px]"><TabNav end /></div>
        <span className="font-bold text-[20px] leading-none text-[#333] font-['Liberation_Sans']">+</span>
      </div>
      <div className="h-[20px] w-[181px] shrink-0 border border-t-0 border-[#9a9997] flex items-center justify-center gap-[8px]">
        <span className="w-[4px] h-[9px] border border-[#c9401f]" />
        PERSONAL ASSESSMENT
      </div>
      <div className="h-[20px] w-[87px] shrink-0 bg-white border-b border-r border-[#9a9997] flex items-center justify-center gap-[8px] font-bold">
        <span className="w-[4px] h-[9px] border border-[#c9401f]" />
        RESULTS
      </div>
    </div>
  );
}

function SideButton({ children, active }: { children: React.ReactNode; active?: boolean }) {
  return (
    <div className={`w-[32px] h-[32px] shrink-0 flex items-center justify-center rounded-[3px] ${active ? "border border-[#bcbbb8]" : ""}`}>{children}</div>
  );
}

function Sidebar() {
  return (
    <div className="w-[47px] shrink-0 -mt-px border-l border-t border-b border-[#b3b2af] flex">
      <div className="w-[6px] border-r border-[#b3b2af] bg-[#f6f5f4]" />
      <div className="flex-1 flex flex-col items-center pt-[14px]">
        <svg width="14" height="13" viewBox="0 0 14 13" className="shrink-0">
          <path d="M0 1.500h10M0 4.500h10M0 7.500h10" stroke="#2a3a5a" />
          <path d="M5 10h9l-4.500 3z" fill="#222" />
        </svg>
        <div className="w-[22px] h-px bg-[#dbdad7] mt-[12px] mb-[8px]" />
        <svg width="23" height="23" viewBox="0 0 23 23" className="shrink-0">
          <path d="M2 6l5 5 1-1 9 9q3 1 3-2l-9-9q1-5-5-6l3 3-2 3-3-1z" fill="#f2f2f0" stroke="#a5a5a3" strokeWidth="1.500" />
        </svg>
        <div className="h-[9px] shrink-0" />
        <svg width="22" height="23" viewBox="0 0 22 23" className="shrink-0">
          <path d="M3 1h18v4h-2V3h-6v15h-4V3H4v2z" fill="#555" />
          <path d="M1 6v16h20z" fill="#9acb6b" stroke="#4e9a1e" />
          <path d="M4 15v4h4z" fill="#f2f2f0" stroke="#4e9a1e" />
        </svg>
        <div className="h-[15px] shrink-0" />
        <svg width="22" height="19" viewBox="0 0 22 19" className="shrink-0">
          <path d="M8 4l3-3 3 3" fill="none" stroke="#555" />
          <rect x=".8" y="4" width="20.400" height="14.500" rx="1" fill="#d78d22" stroke="#8a5a14" />
          <rect x="3" y="6" width="16" height="10" fill="#5a86ad" />
          <path d="M3 12h16v4H3z" fill="#f0c266" />
          <path d="M11 16v-6l-3-2M11 11l3-3" stroke="#3a2a15" fill="none" />
        </svg>
        <div className="h-[10px] shrink-0" />
        <SideButton active>
          <svg width="24" height="24" viewBox="0 0 24 24">
            <circle cx="12" cy="12" r="10.500" fill="#f4f4f2" stroke="#9c9c9a" strokeWidth="2" />
            <path d="M6 6l8 5-1 3z" fill="#d33b3b" />
            <path d="M18 18l-7-4 3-3z" fill="#5a7ec0" />
          </svg>
        </SideButton>
        <div className="h-[10px] shrink-0" />
        <IconFx />
      </div>
    </div>
  );
}

function FindBar() {
  return (
    <div className="h-[39px] shrink-0 flex items-center pl-[3px] text-[#3d3d3d]">
      <Handle />
      <T w="w-[39px]">
        <svg width="19" height="19" viewBox="0 0 19 19">
          <path d="M3 1l6.500 5.500L16 1l2 2-5.500 6.500L18 16l-2 2-6.500-5.500L3 18l-2-2 5.500-6.500L1 3z" fill="#9d9d9b" stroke="#666" />
        </svg>
      </T>
      <Combo w="w-[248px]" text="Find" btn="w-[27px]" muted />
      <T w="w-[34px]">
        <svg width="18" height="24" viewBox="0 0 18 24">
          <path d="M9 1l8 8-3 0-5-5-5 5H1zM9 7l5 5h-3v4H7v-4H4z" fill="#f4f4f2" stroke="#cfcecb" />
          <path d="M7 19h4v3H7z" fill="none" stroke="#cfcecb" strokeDasharray="1 1" />
        </svg>
      </T>
      <T w="w-[32px]">
        <svg width="18" height="24" viewBox="0 0 18 24">
          <path d="M9 23l8-8h-3l-5 5-5-5H1zM9 17l5-5h-3V8H7v4H4z" fill="#f4f4f2" stroke="#cfcecb" />
          <path d="M7 2h4v3H7z" fill="none" stroke="#cfcecb" strokeDasharray="1 1" />
        </svg>
      </T>
      <span className="ml-[4px] w-[52px] text-[12px] text-[#8f8e8b] whitespace-nowrap">Find All</span>
      <div className="w-[14px] h-[14px] rounded-[3px] border border-[#a9a8a5] bg-[#f9f9f8] shrink-0" />
      <span className="ml-[6px] w-[133px] text-[14.700px] whitespace-nowrap">Formatted Display</span>
      <div className="w-[14px] h-[14px] rounded-[3px] border border-[#a9a8a5] bg-[#f9f9f8] shrink-0" />
      <span className="ml-[6px] w-[79px] text-[14.500px] whitespace-nowrap">Match Case</span>
      <Sep w="w-[12px]" />
      <T w="w-[28px]"><IconFind size={23} /></T>
      <Sep w="w-[14px]" />
    </div>
  );
}

function StatusCell({ w, children, className = "" }: { w: string; children?: React.ReactNode; className?: string }) {
  return (
    <div className={`${w} shrink-0 h-[17px] border-r border-[#a9a8a5] flex items-center whitespace-nowrap ${className}`}>{children}</div>
  );
}

function StatusBar() {
  return (
    <div className="h-[21px] shrink-0 border-t border-[#b3b2af] flex items-center text-[12px] text-[#3d3d3d]">
      <StatusCell w="w-[153px]" className="pl-[10px]">Sheet 2 of 2</StatusCell>
      <StatusCell w="w-[152px]" />
      <StatusCell w="w-[288px]" className="pl-[8px]">PageStyle_RESULTS</StatusCell>
      <StatusCell w="w-[195px]" className="pl-[48px]">French (France)</StatusCell>
      <StatusCell w="w-[51px]" />
      <StatusCell w="w-[29px]" className="justify-center">
        <svg width="12" height="9" viewBox="0 0 12 9"><path d="M0 1h8v7H0z" fill="#8c8c8a" /><path d="M10 0v9M9 .5h2M9 8.500h2" stroke="#666" /></svg>
      </StatusCell>
      <StatusCell w="w-[25px]" className="justify-center">
        <svg width="12" height="12" viewBox="0 0 12 12"><path d="M.5 1.500h8v10h-8z" fill="none" stroke="#a9a8a5" /><path d="M3 6l2 2 6-7" fill="none" stroke="#a9a8a5" /></svg>
      </StatusCell>
      <StatusCell w="w-[19px]" />
      <StatusCell w="w-[217px]" className="pl-[63px]">Average: ; Sum: 0</StatusCell>
      <StatusCell w="w-[127px]" className="pl-[14px] gap-[4px] text-[#777]">
        <div className="w-[8px] h-[2px] bg-[#8c8c8a]" />
        <div className="relative w-[86px] h-[2px] bg-[#a9a8a5] ml-[1px]">
          <div className="absolute left-[6px] -top-[3px] w-[7px] h-[7px] rounded-full bg-white border border-[#8c8c8a]" />
          <div className="absolute left-[30px] -top-[3px] w-[1px] h-[8px] bg-[#a9a8a5]" />
        </div>
        <svg width="8" height="8" viewBox="0 0 8 8" className="ml-[3px]"><path d="M0 4h8M4 0v8" stroke="#8c8c8a" strokeWidth="2" /></svg>
      </StatusCell>
      <div className="pl-[8px]">60%</div>
    </div>
  );
}

export default function App() {
  return (
    <div className="w-[1366px] h-[768px] overflow-hidden flex flex-col font-['Noto_Sans',sans-serif] bg-[#f2f1f0]">
      <TopBar />
      <div className="flex-1 flex min-h-0">
        <Dock />
        <div className="flex-1 min-w-0 flex flex-col">
          {/* title + menu */}
          <div className="h-[52px] shrink-0 bg-linear-to-b from-[#3a3935] to-[#514e48] flex flex-col">
            <div className="h-[28px] relative flex items-center justify-center text-[14.800px] font-semibold text-[#dfdbd2]">
              MBTI-personality-assessment-xls.ods - LibreOffice Calc
              <div className="absolute right-[5px] top-[6px] flex gap-[4px]">
                <div className="w-[16px] h-[16px] rounded-full bg-[#6a6863] flex items-center justify-center"><div className="w-[8px] h-[2px] bg-[#3a3935]" /></div>
                <div className="w-[16px] h-[16px] rounded-full bg-[#6a6863] flex items-center justify-center"><div className="w-[8px] h-[7px] border border-[#3a3935]" /></div>
                <div className="w-[16px] h-[16px] rounded-full bg-[#e9602c] flex items-center justify-center text-[12px] leading-none text-[#5a2010]">×</div>
              </div>
            </div>
            <div className="flex-1 flex items-center pl-[6px] text-[14px] text-[#dfdbd2] whitespace-nowrap">
              <span className="w-[36px]">File</span>
              <span className="w-[39px]">Edit</span>
              <span className="w-[45px]">View</span>
              <span className="w-[51px]">Insert</span>
              <span className="w-[62px]">Format</span>
              <span className="w-[52px]">Styles</span>
              <span className="w-[50px]">Sheet</span>
              <span className="w-[44px]">Data</span>
              <span className="w-[48px]">Tools</span>
              <span className="w-[67px]">Window</span>
              <span>Help</span>
            </div>
          </div>
          <ToolbarOne />
          <ToolbarTwo />
          <div className="flex-1 min-h-0 flex">
            <div className="flex-1 min-w-0 flex flex-col">
              <FormulaBar />
              <ColumnHeader />
              <div className="flex-1 min-h-0 flex">
                <RowHeader />
                <Sheet />
                <div className="flex-1 bg-black" />
                <VScroll />
              </div>
              <div className="h-[7px] shrink-0 flex bg-[#f2f1f0]">
                <div className="w-[600px] bg-[#f3906a]" />
              </div>
              <TabsBar />
            </div>
            <Sidebar />
          </div>
          <FindBar />
          <StatusBar />
        </div>
      </div>
    </div>
  );
}
